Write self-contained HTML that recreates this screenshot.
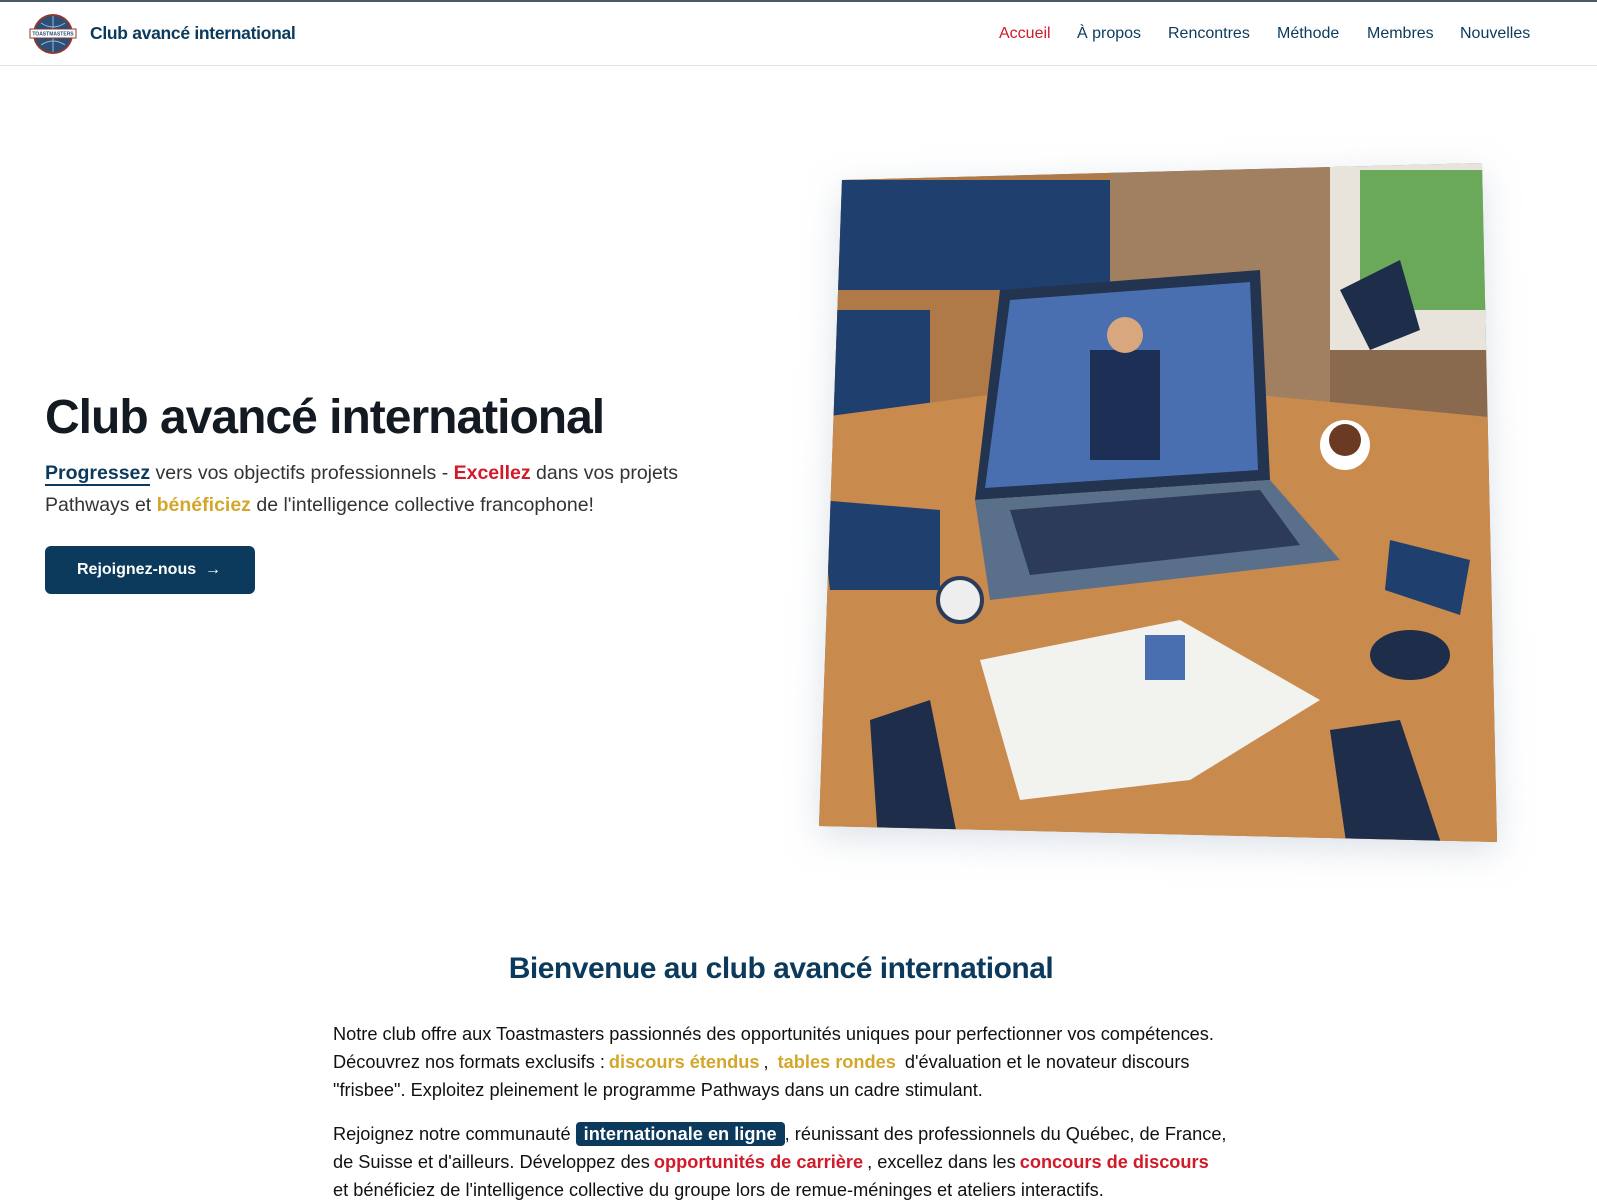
<!DOCTYPE html>
<html><head><meta charset="utf-8">
<style>
*{margin:0;padding:0;box-sizing:border-box}
body{width:1597px;height:1190px;overflow:hidden;background:#fff;font-family:"Liberation Sans",Arial,sans-serif;color:#1a1a1a;position:relative}
.top{position:absolute;top:0;left:0;right:0;height:2px;background:#4a5a66}
.hdr{position:absolute;top:2px;left:0;right:0;height:64px;border-bottom:1px solid #e3e3e3}
.logo{position:absolute;left:29px;top:11px;width:48px;height:42px}
.brand{position:absolute;left:90px;top:21px;font-size:17.5px;font-weight:bold;color:#0b3a5c;letter-spacing:-.3px}
.nav{position:absolute;top:23px;font-size:16px;color:#0b3a5c}
h1{position:absolute;left:45px;top:390px;font-size:48px;font-weight:bold;color:#141a22;letter-spacing:-1px;white-space:nowrap}
.lead{position:absolute;left:45px;top:457px;font-size:19.5px;line-height:32px;color:#333;width:700px}
.b{color:#0b3a5c;font-weight:bold;border-bottom:2px solid #0b3a5c}
.r{color:#d11a2a;font-weight:bold}
.g{color:#d4a72c;font-weight:bold}
.btn{position:absolute;left:45px;top:546px;width:210px;height:48px;background:#0b3a5c;border-radius:6px;color:#fff;font-weight:bold;font-size:16px;line-height:48px;padding-left:32px}
h2{position:absolute;left:0;width:1562px;text-align:center;top:952px;font-size:30px;font-weight:bold;color:#0b3a5c;letter-spacing:-.5px}
.p{position:absolute;left:333px;width:895px;font-size:18.2px;line-height:28px;color:#111}
.pill{background:#0b3a5c;color:#fff;font-weight:bold;padding:2px 8px;border-radius:4px}
.gg{color:#d4a72c;font-weight:bold;padding:0 4px}
.rr{color:#d11a2a;font-weight:bold;padding:0 4px}
</style></head><body>
<div class="top"></div>
<div class="hdr">
<svg class="logo" viewBox="0 0 48 42"><circle cx="24" cy="21" r="20" fill="#8b3a2e"/><circle cx="24" cy="21" r="18" fill="#2a4f78"/><path d="M8 21h32M24 3v36M12 10q12 8 24 0M12 32q12-8 24 0" stroke="#9fb5cc" fill="none" stroke-width="1"/><rect x="1" y="16" width="46" height="9" fill="#fff" stroke="#8b3a2e"/><text x="24" y="22.5" font-size="5" text-anchor="middle" fill="#2a4f78" font-weight="bold">TOASTMASTERS</text></svg>
<div class="brand">Club avancé international</div>
<div class="nav" style="left:999px;color:#d11a2a">Accueil</div>
<div class="nav" style="left:1077px">À propos</div>
<div class="nav" style="left:1168px">Rencontres</div>
<div class="nav" style="left:1277px">Méthode</div>
<div class="nav" style="left:1367px">Membres</div>
<div class="nav" style="left:1460px">Nouvelles</div>
</div>
<h1>Club avancé international</h1>
<div class="lead"><span class="b">Progressez</span> vers vos objectifs professionnels - <span class="r">Excellez</span> dans vos projets Pathways et <span class="g">bénéficiez</span> de l'intelligence collective francophone!</div>
<div class="btn">Rejoignez-nous &nbsp;→</div>
<svg style="position:absolute;left:0;top:0" width="1597" height="900">
<defs><clipPath id="c"><polygon points="842,180 1482,163 1497,842 819,826"/></clipPath>
<filter id="s" x="-20%" y="-20%" width="140%" height="140%"><feGaussianBlur stdDeviation="18"/></filter></defs>
<polygon points="842,190 1482,173 1497,852 819,836" fill="#b8c4d0" opacity=".5" filter="url(#s)"/>
<g clip-path="url(#c)">
<rect x="800" y="150" width="720" height="720" fill="#8a6a4e"/>
<rect x="800" y="150" width="320" height="260" fill="#b07a48"/>
<rect x="810" y="180" width="300" height="110" fill="#1f3f6e"/>
<rect x="810" y="310" width="120" height="110" fill="#1f3f6e"/>
<rect x="1110" y="150" width="220" height="300" fill="#a08060"/>
<rect x="1330" y="150" width="180" height="200" fill="#e8e4dc"/>
<rect x="1360" y="170" width="130" height="140" fill="#6aa85a"/>
<polygon points="800,420 1100,380 1520,420 1520,870 800,870" fill="#c98a4e"/>
<polygon points="1000,290 1260,270 1270,480 975,500" fill="#22344f"/>
<polygon points="1010,300 1250,282 1258,470 985,488" fill="#4a6fb0"/>
<rect x="1090" y="350" width="70" height="110" fill="#1d2f55"/>
<circle cx="1125" cy="335" r="18" fill="#d9a77e"/>
<polygon points="975,500 1270,480 1340,560 990,600" fill="#5a6f8a"/>
<polygon points="1010,510 1260,490 1300,545 1030,575" fill="#2b3b58"/>
<circle cx="1345" cy="445" r="25" fill="#fff"/><circle cx="1345" cy="440" r="16" fill="#6a3a22"/>
<polygon points="1340,290 1400,260 1420,330 1370,350" fill="#1e2d4a"/>
<polygon points="820,500 940,510 940,590 830,590" fill="#1f3f6e"/>
<polygon points="980,660 1180,620 1320,700 1190,780 1020,800" fill="#f2f2ee"/>
<rect x="1145" y="635" width="40" height="45" fill="#4a6fb0"/>
<polygon points="870,720 930,700 960,850 880,870" fill="#1e2d4a"/>
<polygon points="1330,730 1400,720 1450,870 1350,870" fill="#1e2d4a"/>
<ellipse cx="1410" cy="655" rx="40" ry="25" fill="#1e2d4a"/>
<polygon points="1390,540 1470,560 1460,615 1385,590" fill="#1f3f6e"/>
<circle cx="960" cy="600" r="22" fill="#eee" stroke="#2b3b58" stroke-width="4"/>
</g>
</svg>
<h2>Bienvenue au club avancé international</h2>
<div class="p" style="top:1020px">Notre club offre aux Toastmasters passionnés des opportunités uniques pour perfectionner vos compétences. Découvrez nos formats exclusifs :<span class="gg">discours étendus</span>, <span class="gg">tables rondes</span> d'évaluation et le novateur discours "frisbee". Exploitez pleinement le programme Pathways dans un cadre stimulant.</div>
<div class="p" style="top:1120px">Rejoignez notre communauté <span class="pill">internationale en ligne</span>, réunissant des professionnels du Québec, de France, de Suisse et d'ailleurs. Développez des<span class="rr">opportunités de carrière</span>, excellez dans les<span class="rr">concours de discours</span> et bénéficiez de l'intelligence collective du groupe lors de remue-méninges et ateliers interactifs.</div>
</body></html>
